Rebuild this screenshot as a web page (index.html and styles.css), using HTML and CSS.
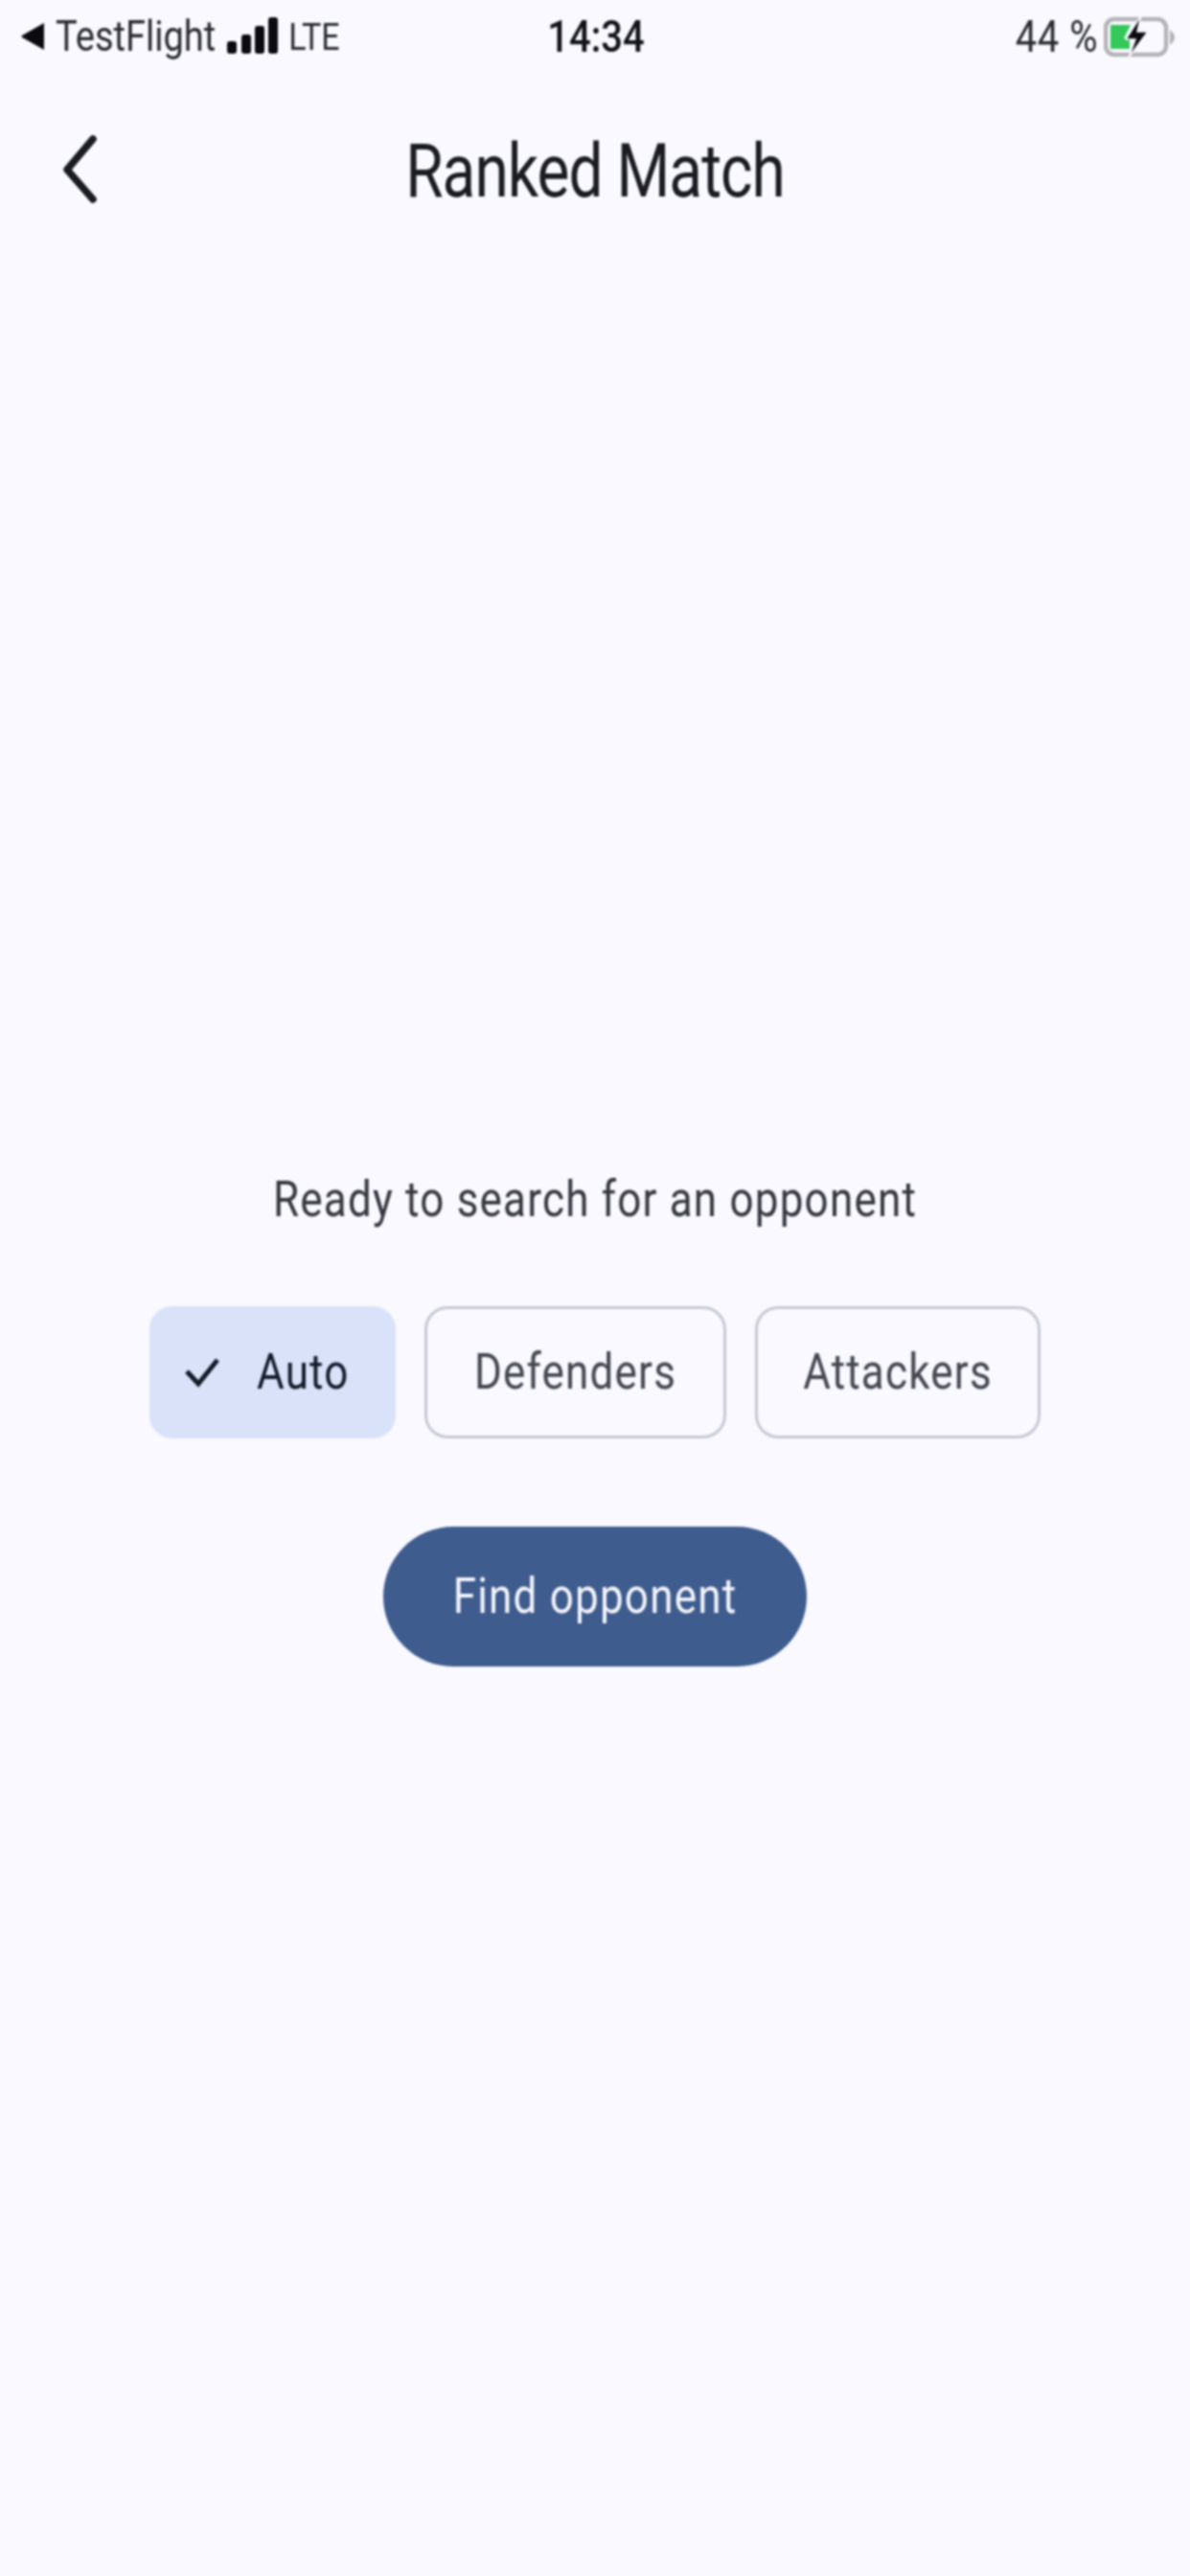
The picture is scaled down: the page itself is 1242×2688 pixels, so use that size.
FILE: index.html
```html
<!DOCTYPE html>
<html lang="en">
<head>
    <meta charset="UTF-8">
    <meta name="viewport" content="width=device-width, initial-scale=1.0">
    <title>Ranked Match</title>
    <link rel="stylesheet" href="styles.css">
</head>
<body>
    <div class="page">
        <div class="status-bar">
            <div class="status-left">
                <svg class="back-arrow" width="24" height="28" viewBox="0 0 24 28"><path d="M24 0V28L1 15Q0 14 1 13Z" fill="#0b0b0f"/></svg>
                <span class="status-text tall">TestFlight</span>
                <svg class="signal" width="53" height="38" viewBox="0 0 53 38">
                    <rect x="0" y="25" width="10" height="13" rx="3"/>
                    <rect x="15" y="18" width="10" height="20" rx="3"/>
                    <rect x="29" y="9" width="10" height="29" rx="3"/>
                    <rect x="43" y="0" width="10" height="38" rx="3"/>
                </svg>
                <span class="status-text lte tall">LTE</span>
            </div>
            <span class="status-time tall">14:34</span>
            <div class="status-right">
                <span class="status-text percent tall">44 %</span>
                <svg class="battery" width="76" height="44" viewBox="0 0 76 44">
                    <rect x="2" y="4" width="63" height="37" rx="9" fill="none" stroke="#b4b4b8" stroke-width="4.5"/>
                    <path d="M69 15Q74 19 74 23T69 31Z" fill="#b4b4b8"/>
                    <path d="M7 10H28L21 24H27V35H7Z" fill="#34c759"/>
                    <path d="M39 0L23 25H33L26 44L46 17H35Z" fill="#0b0b0f" stroke="#f9f9ff" stroke-width="1.5"/>
                </svg>
            </div>
        </div>

        <header class="top-bar">
            <svg class="nav-back" width="44" height="76" viewBox="0 0 44 76"><path d="M36 6L9 38L36 69" fill="none" stroke="#1a1c20" stroke-width="7.5" stroke-linecap="round" stroke-linejoin="round"/></svg>
            <h1 class="title tall">Ranked Match</h1>
        </header>

        <main class="content">
            <p class="prompt tall">Ready to search for an opponent</p>
            <div class="chips">
                <div class="chip chip-selected">
                    <svg class="check" width="36" height="32" viewBox="0 0 36 32"><path d="M2 15L14 28L34 3" fill="none" stroke="#131c2b" stroke-width="5"/></svg>
                    <span class="tall">Auto</span>
                </div>
                <div class="chip chip-defenders"><span class="tall">Defenders</span></div>
                <div class="chip chip-attackers"><span class="tall">Attackers</span></div>
            </div>
            <button class="find-btn" type="button"><span class="tall">Find opponent</span></button>
        </main>
    </div>
</body>
</html>
```

FILE: styles.css
```css
body {
    margin: 0;
    background: #f9f9ff;
    font-family: 'Roboto', 'Liberation Sans', sans-serif;
    color: #1a1c20;
}

.page {
    height: 2688px;
    display: flex;
    flex-direction: column;
    filter: blur(0.8px);
}

/* the screenshot is stretched vertically, so text gets scaled to fit */
.tall {
    display: inline-block;
    transform: scaleY(1.16);
}

.status-bar {
    height: 76px;
    padding: 0 14px 0 22px;
    display: grid;
    grid-template-columns: 1fr auto 1fr;
    align-items: center;
}

.status-left, .status-right {
    display: flex;
    align-items: center;
}

.status-right {
    justify-content: flex-end;
    gap: 6px;
}

.status-text {
    font-size: 38px;
    color: #2a2b30;
}

.percent {
    font-size: 40px;
    letter-spacing: 0.5px;
}

.status-time {
    font-size: 40px;
    font-weight: 500;
    color: #111216;
    transform: translateX(-3px) scaleY(1.16);
}

.back-arrow {
    margin-right: 12px;
}

.signal {
    margin: -2px 0 0 12px;
    fill: #0b0b0f;
}

.lte {
    margin-left: 11px;
    font-size: 34px;
}

.top-bar {
    height: 100px;
    margin-top: 52px;
    display: flex;
    align-items: center;
    justify-content: center;
    position: relative;
}

.nav-back {
    position: absolute;
    left: 61px;
    top: 11px;
}

.title {
    margin: 0;
    font-size: 64px;
    font-weight: 400;
    letter-spacing: -1px;
    transform: scaleY(1.22);
}

.content {
    padding-top: 997px;
    display: flex;
    flex-direction: column;
    align-items: center;
}

.prompt {
    margin: 0;
    font-size: 44px;
    letter-spacing: 1.2px;
    line-height: 54px;
    color: #36383e;
}

.chips {
    margin-top: 84px;
    display: flex;
    gap: 30px;
}

.chip {
    height: 138px;
    box-sizing: border-box;
    border-radius: 24px;
    border: 3px solid #c8c9d1;
    display: flex;
    align-items: center;
    justify-content: center;
    font-size: 44px;
    letter-spacing: 1.2px;
    color: #44474e;
}

.chip-selected {
    width: 257px;
    padding-left: 34px;
    justify-content: flex-start;
    background: #dae2f9;
    border-color: #dae2f9;
    color: #131c2b;
    gap: 39px;
}

.chip-defenders {
    width: 315px;
}

.chip-attackers {
    width: 298px;
}

.find-btn {
    margin-top: 92px;
    width: 442px;
    height: 146px;
    border: none;
    border-radius: 73px;
    background: #3f5c8e;
    color: #f4f5fb;
    font-family: inherit;
    font-size: 44px;
    letter-spacing: 1.2px;
}
```
